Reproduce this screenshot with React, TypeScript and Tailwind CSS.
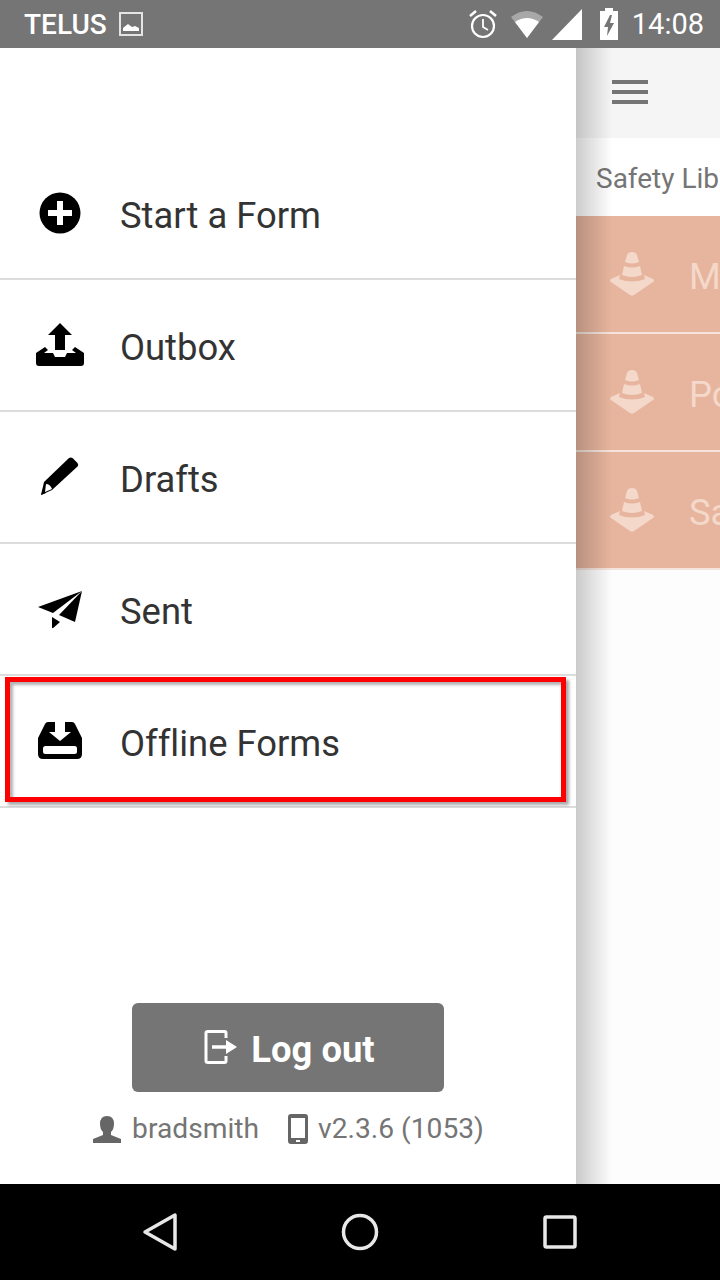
import React from "react";

const FONT = "font-['Roboto','Liberation_Sans',sans-serif]";

function PlusCircle() {
  return (
    <svg width="42" height="42" viewBox="0 0 42 42">
      <circle cx="21" cy="21" r="20.5" fill="#000" />
      <path d="M18 9h6v9h9v6h-9v9h-6v-9H9v-6h9z" fill="#fff" />
    </svg>
  );
}

function Outbox() {
  return (
    <svg width="50" height="44" viewBox="0 0 50 44">
      <path d="M25 0l12 12h-7v15H20V12h-7z" fill="#000" />
      <path d="M1 30l9-6 3 3-4 3h9l2 4h10l2-4h9l-4-3 3-3 9 6v10q0 3-3 3H4q-3 0-3-3z" fill="#000" />
    </svg>
  );
}

function Pencil() {
  return (
    <svg width="40" height="40" viewBox="0 0 40 40">
      <path d="M29 1q2-1 3.500 0l5 5q1.500 2 0 3.500L12 33 1 38l3-13z" fill="#000" />
      <path d="M6 27q4 0 6 5l-7 3z" fill="#fff" />
      <path d="M3 33l3 3-5 2z" fill="#000" />
    </svg>
  );
}

function Plane() {
  return (
    <svg width="46" height="38" viewBox="0 0 46 38">
      <path d="M45 1L1 17l15 6z" fill="#000" />
      <path d="M45 1L22 25l16 7z" fill="#000" />
      <path d="M15 27l8 5-8 7z" fill="#000" />
    </svg>
  );
}

function Inbox() {
  return (
    <svg width="44" height="38" viewBox="0 0 44 38">
      <path
        d="M10 0h7v10h-6l11 9 11-9h-6V0h7q2 0 3 2l7 14v16q0 5-5 5H5q-5 0-5-5V16L7 2q1-2 3-2z"
        fill="#000"
      />
      <rect x="5" y="24" width="34" height="8" rx="2.500" fill="#fff" />
    </svg>
  );
}

function Cone() {
  return (
    <svg className="shrink-0" width="46" height="46" viewBox="0 0 46 46" fill="#f4d8ca">
      <path d="M18 4q1-3 5-3t5 3l2 7q-7 3-14 0z" />
      <path d="M15 15q8 3 16 0l2 9q-10 4-20 0z" />
      <path d="M11 24l-1 4q13 5 26 0l-1-4 9 4q2 2 0 3L25 44q-2 1-4 0L2 31q-2-1 0-3z" />
    </svg>
  );
}

function NavRow({ icon, label }: { icon: React.ReactNode; label: string }) {
  return (
    <div className="flex h-[132px] items-center border-b-2 border-[#dcdcdc]">
      <div className="flex w-[120px] justify-center">{icon}</div>
      <span className="pt-[6px] text-[36.4px] [font-variant-ligatures:none] text-[#333]">{label}</span>
    </div>
  );
}

function SafetyRow({ text }: { text: string }) {
  return (
    <div className="flex h-[118px] items-center gap-[34px] overflow-hidden border-b-2 border-[#f5e4dc] bg-[#e7b59e] pl-[33px]">
      <Cone />
      <span className="pt-[6px] text-[36.4px] whitespace-nowrap text-[#f4d8ca]">{text}</span>
    </div>
  );
}

export default function App() {
  return (
    <div className={`flex h-[1280px] w-[720px] flex-col overflow-hidden bg-white ${FONT}`}>
      {/* status bar */}
      <div className="flex h-[48px] items-center justify-between bg-[#757575] pr-[16px] pl-[24px] text-[28px] text-white">
        <div className="flex items-center gap-[12px]">
          <span className="pt-[2px] font-medium">TELUS</span>
          <svg width="24" height="24" viewBox="0 0 24 24">
            <rect x="1" y="1" width="22" height="22" fill="none" stroke="#e4e4e4" strokeWidth="2" />
            <path d="M4 19v-3l5-4 4 3 3-1 4 2v3z" fill="#fff" />
          </svg>
        </div>
        <div className="flex items-center">
          <svg width="30" height="30" viewBox="0 0 30 30" fill="none" stroke="#fff">
            <circle cx="15" cy="17" r="11" strokeWidth="2.200" />
            <path d="M15 10v8l5 3" strokeWidth="1.800" />
            <path d="M2 7l6-5M28 7l-6-5" strokeWidth="2.500" />
          </svg>
          <svg className="ml-[12px]" width="34" height="30" viewBox="0 0 34 30">
            <path d="M17 29L1 8q16-12 32 0z" fill="#a8a8a8" />
            <path d="M17 29L5 13q12-8 24 0z" fill="#fff" />
          </svg>
          <svg className="ml-[7px]" width="32" height="32" viewBox="0 0 32 32">
            <path d="M31 1v31H1z" fill="#fff" />
          </svg>
          <svg className="ml-[16px]" width="20" height="32" viewBox="0 0 20 32">
            <path d="M6 0h8v3h5v29H1V3h5z" fill="#fff" />
            <path d="M11 7l-6 12h4l-1 9 7-13h-4l2-8z" fill="#757575" />
          </svg>
          <span className="ml-[13px] pt-[2px] text-[29px]">14:08</span>
        </div>
      </div>

      <div className="relative flex min-h-0 flex-1">
        {/* drawer */}
        <div className="flex w-[576px] flex-col bg-white">
          <div className="h-[100px]" />
          <NavRow icon={<PlusCircle />} label="Start a Form" />
          <NavRow icon={<Outbox />} label="Outbox" />
          <NavRow icon={<Pencil />} label="Drafts" />
          <NavRow icon={<Plane />} label="Sent" />
          <NavRow icon={<Inbox />} label="Offline Forms" />
          <div className="flex flex-1 flex-col items-center justify-end pb-[34px]">
            <div className="flex h-[89px] w-[312px] items-center justify-center gap-[13px] rounded-[6px] bg-[#757575] pl-[3px] text-[36.4px] font-bold text-white">
              <svg width="34" height="34" viewBox="0 0 34 34" fill="none" stroke="#fff" strokeWidth="3">
                <path d="M22 8V3q0-1.500-1.500-1.500H4Q2 1.500 2 3v28q0 1.500 2 1.500h16.500Q22 32.500 22 31v-5" />
                <path d="M8 17h14" strokeWidth="3.500" />
                <path d="M22 10l11 7-11 7z" fill="#fff" stroke="none" />
              </svg>
              <span className="pt-[6px]">Log out</span>
            </div>
            <div className="mt-[16px] flex items-center text-[28.2px] text-[#757575]">
              <svg width="30" height="30" viewBox="0 0 30 30" fill="#666">
                <path d="M15 2q7 0 7 8 0 5-3 8v3l10 4v4H1v-4l10-4v-3q-3-3-3-8 0-8 7-8z" />
              </svg>
              <span className="ml-[10px]">bradsmith</span>
              <svg className="ml-[29px]" width="20" height="30" viewBox="0 0 20 30" fill="#666">
                <path fillRule="evenodd" d="M3 0h14q3 0 3 3v24q0 3-3 3H3q-3 0-3-3V3q0-3 3-3zM3 4v20h14V4zM8 26v2h4v-2z" />
              </svg>
              <span className="ml-[10px]">v2.3.6 (1053)</span>
            </div>
          </div>
        </div>

        {/* page behind the drawer */}
        <div className="relative flex min-w-0 flex-1 flex-col bg-[#fdfdfd]">
          <div className="flex h-[90px] items-center bg-[#f5f5f5] pb-[2px] pl-[36px]">
            <div className="flex w-[36px] flex-col gap-[6px]">
              <div className="h-[4px] bg-[#757575]" />
              <div className="h-[4px] bg-[#757575]" />
              <div className="h-[4px] bg-[#757575]" />
            </div>
          </div>
          <div className="flex h-[78px] items-center overflow-hidden bg-white pt-[4px] pl-[20px] text-[28px] whitespace-nowrap text-[#757575]">
            Safety Lib
          </div>
          <SafetyRow text="M" />
          <SafetyRow text="Po" />
          <SafetyRow text="Sa" />
          <div className="pointer-events-none absolute inset-y-0 left-0 w-[36px] bg-gradient-to-r from-black/20 to-transparent" />
        </div>

        {/* red highlight on the screenshot */}
        <div className="absolute top-[629px] left-[5px] h-[125px] w-[561px] border-[5px] border-[#ff0000] shadow-[3px_3px_3px_rgba(0,0,0,0.35),inset_3px_3px_3px_rgba(0,0,0,0.3)]" />
      </div>

      {/* android nav bar */}
      <div className="flex h-[96px] items-center justify-center bg-black">
        <div className="flex w-[480px] items-center justify-between px-[22px]">
          <svg width="36" height="40" viewBox="0 0 36 40" fill="none" stroke="#e8e8e8" strokeWidth="3.500">
            <path d="M33 3v34L3 20z" strokeLinejoin="round" />
          </svg>
          <svg width="38" height="38" viewBox="0 0 38 38" fill="none" stroke="#e8e8e8" strokeWidth="3.500">
            <circle cx="19" cy="19" r="16.500" />
          </svg>
          <svg width="36" height="36" viewBox="0 0 36 36" fill="none" stroke="#e8e8e8" strokeWidth="3.500">
            <rect x="3" y="3" width="30" height="30" rx="1.500" />
          </svg>
        </div>
      </div>
    </div>
  );
}
